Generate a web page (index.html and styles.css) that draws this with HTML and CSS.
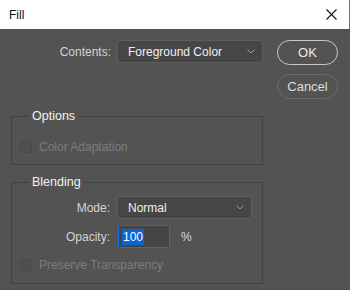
FILE: index.html
```html
<!DOCTYPE html>
<html lang="en">
<head>
    <meta charset="UTF-8">
    <title>Fill</title>
    <link rel="stylesheet" href="styles.css">
</head>
<body>
    <div class="titlebar">
        <span class="title">Fill</span>
        <svg class="close" width="11" height="11" viewBox="0 0 11 11">
            <path d="M0.5 0.5 L10.5 10.5 M10.5 0.5 L0.5 10.5" stroke="#111" stroke-width="1.1" fill="none"/>
        </svg>
    </div>

    <div class="dialog">
        <div class="left">
            <div class="row top-row">
                <span class="label wide">Contents:</span>
                <div class="select contents">
                    <span>Foreground Color</span>
                    <svg width="8" height="5" viewBox="0 0 8 5"><path d="M0.5 0.5 L4 4 L7.5 0.5" stroke="#9c9c9c" fill="none"/></svg>
                </div>
            </div>

            <fieldset class="group options">
                <legend>Options</legend>
                <div class="check-row first">
                    <span class="box"></span>
                    <span class="check-label">Color Adaptation</span>
                </div>
            </fieldset>

            <fieldset class="group blending">
                <legend>Blending</legend>
                <div class="row mode-row">
                    <span class="label">Mode:</span>
                    <div class="select mode">
                        <span>Normal</span>
                        <svg width="8" height="5" viewBox="0 0 8 5"><path d="M0.5 0.5 L4 4 L7.5 0.5" stroke="#9c9c9c" fill="none"/></svg>
                    </div>
                </div>
                <div class="row opacity-row">
                    <span class="label">Opacity:</span>
                    <div class="field"><span class="selected">100</span></div>
                    <span class="unit">%</span>
                </div>
                <div class="check-row last">
                    <span class="box"></span>
                    <span class="check-label">Preserve Transparency</span>
                </div>
            </fieldset>
        </div>

        <div class="buttons">
            <button class="btn ok">OK</button>
            <button class="btn cancel">Cancel</button>
        </div>
    </div>
</body>
</html>
```

FILE: styles.css
```css
* {
    box-sizing: border-box;
}
body {
    margin: 0;
    width: 350px;
    height: 290px;
    background-color: #535353;
    font-family: "Liberation Sans", Arial, sans-serif;
    font-size: 12px;
    color: #d8d8d8;
    overflow: hidden;
}
.titlebar {
    height: 29px;
    background: white;
    display: flex;
    align-items: center;
    justify-content: space-between;
    padding: 0 12px 0 9px;
    border-right: 1px solid #707070;
}
.title {
    color: #111;
    font-size: 12px;
}
.close {
    display: block;
}
.dialog {
    display: flex;
    padding-left: 11px;
}
.left {
    width: 252px;
}
.row {
    display: flex;
    align-items: center;
}
.top-row {
    margin-top: 11px;
}
.label {
    width: 90px;
    text-align: right;
    margin-right: 7px;
    color: #d4d4d4;
}
.label.wide {
    width: 100px;
    margin-right: 6px;
}
.select {
    height: 23px;
    display: flex;
    align-items: center;
    justify-content: space-between;
    padding: 0 7px 0 10px;
    background: #464646;
    border: 1px solid #5e5e5e;
    border-radius: 3px;
    color: #f0f0f0;
}
.select svg {
    display: block;
}
.select.contents {
    width: 146px;
}
.select.mode {
    width: 135px;
}
.group {
    margin: 0;
    padding: 0 8px;
    border: 1px solid #424242;
}
.group legend {
    margin-left: 9px;
    padding: 0 3px;
    line-height: 16px;
    font-size: 12.5px;
    color: #f2f2f2;
}
.options {
    margin-top: 45px;
    padding-bottom: 9px;
}
.blending {
    margin-top: 9px;
    padding-bottom: 10px;
}
.check-row {
    display: flex;
    align-items: center;
    height: 16px;
}
.check-row.first {
    margin-top: 15px;
}
.check-row.last {
    margin-top: 9px;
}
.box {
    width: 12px;
    height: 12px;
    border: 1px solid #4a4a4a;
    background: #505050;
    border-radius: 2px;
}
.check-label {
    margin-left: 7px;
    color: #7c7c7c;
}
.mode-row {
    margin-top: 6px;
}
.opacity-row {
    margin-top: 6px;
}
.field {
    width: 52px;
    height: 23px;
    margin-left: 1px;
    padding: 2px 3px;
    border: 1px solid #1a6dd2;
    background: #454545;
    display: flex;
    align-items: center;
}
.selected {
    background: #0c64d6;
    color: white;
    line-height: 16px;
    padding: 0 1px;
}
.unit {
    margin-left: 11px;
    color: #dcdcdc;
}
.buttons {
    margin-left: 14px;
    display: flex;
    flex-direction: column;
}
.btn {
    width: 61px;
    height: 25px;
    border-radius: 13px;
    background: transparent;
    font-family: "Liberation Sans", Arial, sans-serif;
    font-size: 13px;
    cursor: pointer;
}
.btn.ok {
    margin-top: 11px;
    border: 1.5px solid #c8c8c8;
    color: #ececec;
}
.btn.cancel {
    margin-top: 9px;
    border: 1.5px solid #6c6c6c;
    color: #dedede;
}
```
